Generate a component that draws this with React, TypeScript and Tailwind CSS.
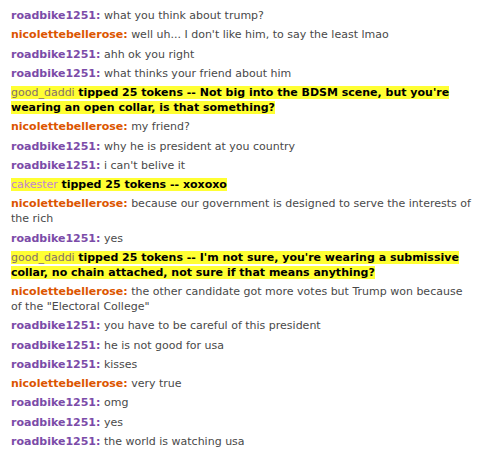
const PURPLE = 'text-[#7b4ba8]';
const ORANGE = 'text-[#dc5500]';

type Msg =
  | { kind: 'chat'; user: 'roadbike1251' | 'nicolettebellerose'; text: string }
  | { kind: 'tip'; user: string; nameColor: string; text: string };

const messages: Msg[] = [
  { kind: 'chat', user: 'roadbike1251', text: 'what you think about trump?' },
  { kind: 'chat', user: 'nicolettebellerose', text: "well uh... I don't like him, to say the least lmao" },
  { kind: 'chat', user: 'roadbike1251', text: 'ahh ok you right' },
  { kind: 'chat', user: 'roadbike1251', text: 'what thinks your friend about him' },
  {
    kind: 'tip',
    user: 'good_daddi',
    nameColor: 'text-[#85706a]',
    text: "tipped 25 tokens -- Not big into the BDSM scene, but you're wearing an open collar, is that something?",
  },
  { kind: 'chat', user: 'nicolettebellerose', text: 'my friend?' },
  { kind: 'chat', user: 'roadbike1251', text: 'why he is president at you country' },
  { kind: 'chat', user: 'roadbike1251', text: "i can't belive it" },
  { kind: 'tip', user: 'cakester', nameColor: 'text-[#c184d4]', text: 'tipped 25 tokens -- xoxoxo' },
  { kind: 'chat', user: 'nicolettebellerose', text: 'because our government is designed to serve the interests of the rich' },
  { kind: 'chat', user: 'roadbike1251', text: 'yes' },
  {
    kind: 'tip',
    user: 'good_daddi',
    nameColor: 'text-[#85706a]',
    text: "tipped 25 tokens -- I'm not sure, you're wearing a submissive collar, no chain attached, not sure if that means anything?",
  },
  {
    kind: 'chat',
    user: 'nicolettebellerose',
    text: 'the other candidate got more votes but Trump won because\nof the "Electoral College"',
  },
  { kind: 'chat', user: 'roadbike1251', text: 'you have to be careful of this president' },
  { kind: 'chat', user: 'roadbike1251', text: 'he is not good for usa' },
  { kind: 'chat', user: 'roadbike1251', text: 'kisses' },
  { kind: 'chat', user: 'nicolettebellerose', text: 'very true' },
  { kind: 'chat', user: 'roadbike1251', text: 'omg' },
  { kind: 'chat', user: 'roadbike1251', text: 'yes' },
  { kind: 'chat', user: 'roadbike1251', text: 'the world is watching usa' },
];

export default function App() {
  return (
    <div
      className="h-[456px] w-[484px] overflow-hidden bg-white pl-[11px] pr-[8px] pt-[6px] text-[11px] leading-[15px] text-[#494949]"
      style={{ fontFamily: '"DejaVu Sans", Verdana, sans-serif' }}
    >
      {messages.map((m, i) =>
        m.kind === 'chat' ? (
          <div key={i} className="whitespace-pre-line pt-[2px] pb-[2.25px]">
            <span className={`font-bold ${m.user === 'roadbike1251' ? PURPLE : ORANGE}`}>{m.user}:</span> {m.text}
          </div>
        ) : (
          <div key={i} className="pt-[2px] pb-[2.25px]">
            <span className="bg-[#ffff33]">
              <span className={m.nameColor}>{m.user}</span>{' '}
              <span className="font-bold text-black">{m.text}</span>
            </span>
          </div>
        ),
      )}
    </div>
  );
}
